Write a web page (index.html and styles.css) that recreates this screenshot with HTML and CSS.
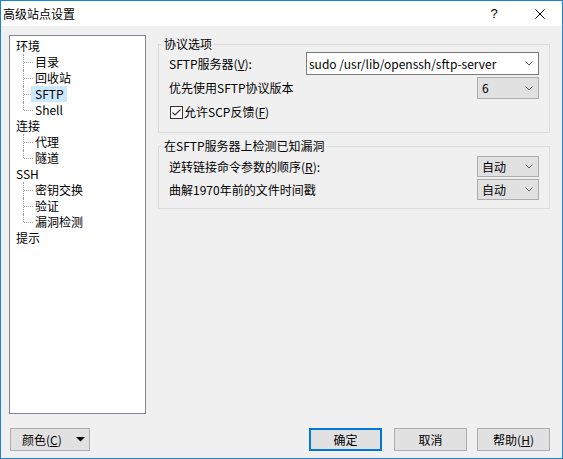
FILE: index.html
```html
<!DOCTYPE html>
<html lang="zh-CN">
<head>
<meta charset="utf-8">
<title>高级站点设置</title>
<link rel="stylesheet" href="styles.css">
</head>
<body>
<div class="window">
  <div class="titlebar">
    <span class="title">高级站点设置</span>
    <span class="tb-btn tb-help">?</span>
    <span class="tb-btn tb-close"><svg width="10" height="10" viewBox="0 0 10 10"><path d="M0.5 0.5 L9.5 9.5 M9.5 0.5 L0.5 9.5" stroke="#000" stroke-width="1" fill="none"/></svg></span>
  </div>
  <div class="body">
    <div class="main">
      <div class="tree">
        <div class="node">环境</div>
        <div class="leaf"><span class="lbl">目录</span></div>
        <div class="leaf"><span class="lbl">回收站</span></div>
        <div class="leaf"><span class="lbl sel">SFTP</span></div>
        <div class="leaf last"><span class="lbl">Shell</span></div>
        <div class="node">连接</div>
        <div class="leaf"><span class="lbl">代理</span></div>
        <div class="leaf last"><span class="lbl">隧道</span></div>
        <div class="node">SSH</div>
        <div class="leaf"><span class="lbl">密钥交换</span></div>
        <div class="leaf"><span class="lbl">验证</span></div>
        <div class="leaf last"><span class="lbl">漏洞检测</span></div>
        <div class="node">提示</div>
      </div>
      <div class="panel">
        <div class="group g1">
          <div class="legend">协议选项</div>
          <div class="row r1">
            <span class="label">SFTP服务器(<u>V</u>):</span>
            <div class="combo edit"><span>sudo /usr/lib/openssh/sftp-server</span><svg class="chev" width="8" height="5" viewBox="0 0 8 5"><polyline points="0.5,0.5 4,4 7.5,0.5" fill="none" stroke="#606060" stroke-width="1"/></svg></div>
          </div>
          <div class="row r2">
            <span class="label">优先使用SFTP协议版本</span>
            <div class="combo ro"><span>6</span><svg class="chev" width="8" height="5" viewBox="0 0 8 5"><polyline points="0.5,0.5 4,4 7.5,0.5" fill="none" stroke="#606060" stroke-width="1"/></svg></div>
          </div>
          <div class="row r3">
            <span class="check"><span class="box"><svg width="11" height="11" viewBox="0 0 11 11"><polyline points="1.5,5.5 4,8 9.5,2.5" fill="none" stroke="#333" stroke-width="1.2"/></svg></span>允许SCP反馈(<u>F</u>)</span>
          </div>
        </div>
        <div class="group g2">
          <div class="legend">在SFTP服务器上检测已知漏洞</div>
          <div class="row r4">
            <span class="label">逆转链接命令参数的顺序(<u>R</u>):</span>
            <div class="combo ro"><span>自动</span><svg class="chev" width="8" height="5" viewBox="0 0 8 5"><polyline points="0.5,0.5 4,4 7.5,0.5" fill="none" stroke="#606060" stroke-width="1"/></svg></div>
          </div>
          <div class="row r5">
            <span class="label">曲解1970年前的文件时间戳</span>
            <div class="combo ro"><span>自动</span><svg class="chev" width="8" height="5" viewBox="0 0 8 5"><polyline points="0.5,0.5 4,4 7.5,0.5" fill="none" stroke="#606060" stroke-width="1"/></svg></div>
          </div>
        </div>
      </div>
    </div>
    <div class="buttons">
      <div class="btn color-btn"><span>颜色(<u>C</u>)</span><svg class="drop" width="9" height="5" viewBox="0 0 9 5"><polygon points="0,0 9,0 4.5,4.5" fill="#000"/></svg></div>
      <div class="btn default ok">确定</div>
      <div class="btn cancel">取消</div>
      <div class="btn help">帮助(<u>H</u>)</div>
    </div>
  </div>
</div>
</body>
</html>
```

FILE: styles.css
```css
html, body {
  margin: 0;
  padding: 0;
  background: #ffffff;
}

.window {
  width: 563px;
  height: 459px;
  box-sizing: border-box;
  border: 1px solid #1883d7;
  background: #f0f0f0;
  display: flex;
  flex-direction: column;
  font-family: "Noto Sans CJK SC", "Noto Sans", sans-serif;
  font-size: 12px;
  line-height: 16px;
  color: #000;
}

.titlebar {
  height: 25px;
  flex: none;
  background: #ffffff;
  display: flex;
  align-items: center;
}

.title {
  flex: 1;
  padding-left: 2px;
}

.tb-btn {
  height: 25px;
  display: flex;
  align-items: center;
  justify-content: center;
}

.tb-help {
  width: 46px;
  font-family: "Liberation Sans", sans-serif;
  font-size: 13px;
}

.tb-close {
  width: 45px;
}

.body {
  flex: 1;
  display: flex;
  flex-direction: column;
  padding: 9px 12px 7px 8px;
}

.main {
  display: flex;
  gap: 12px;
  height: 379px;
}

.tree {
  width: 137px;
  box-sizing: border-box;
  border: 1px solid #828790;
  background: #ffffff;
  padding-top: 2px;
}

.node {
  height: 16px;
  padding-left: 6px;
}

.leaf {
  position: relative;
  height: 16px;
  padding-left: 21px;
}

.leaf::before {
  content: "";
  position: absolute;
  left: 13px;
  top: 0;
  height: 16px;
  border-left: 1px dotted #a0a0a0;
}

.leaf.last::before {
  height: 8px;
}

.leaf::after {
  content: "";
  position: absolute;
  left: 14px;
  top: 8px;
  width: 9px;
  border-top: 1px dotted #a0a0a0;
}

.lbl {
  position: relative;
  z-index: 1;
  display: inline-block;
  padding: 0 3px 0 4px;
  height: 16px;
}

.lbl.sel {
  background: #cce8ff;
}

.panel {
  width: 392px;
  padding-top: 9px;
}

.group {
  border: 1px solid #dcdcdc;
  padding: 0 10px;
}

.legend {
  width: max-content;
  background: #f0f0f0;
  margin: -8px 0 0 -6px;
  padding: 0 1px;
  height: 14px;
  line-height: 14px;
}

.row {
  display: flex;
  align-items: center;
  justify-content: space-between;
}

.r1 { height: 23px; margin-top: 1px; }
.r2 { height: 22px; margin-top: 2px; }
.r3 { height: 20px; margin-top: 3px; }
.g1 { padding-bottom: 10px; }

.g2 { margin-top: 13px; padding-bottom: 8px; }
.r4 { height: 21px; margin-top: 3px; }
.r5 { height: 21px; margin-top: 2px; }

.combo {
  box-sizing: border-box;
  height: 100%;
  display: flex;
  align-items: center;
}

.combo.edit {
  width: 233px;
  background: #ffffff;
  border: 1px solid #7a7a7a;
  padding-left: 2px;
}

.combo.ro {
  width: 62px;
  background: #e1e1e1;
  border: 1px solid #adadad;
  padding-left: 4px;
}

.chev {
  margin-left: auto;
  margin-right: 5px;
}

.check {
  display: flex;
  align-items: center;
  margin-left: 1px;
}

.box {
  box-sizing: border-box;
  width: 13px;
  height: 13px;
  border: 1px solid #333333;
  background: #ffffff;
  margin-right: 1px;
  display: flex;
}

.buttons {
  display: flex;
  height: 23px;
  margin-top: 14px;
}

.btn {
  box-sizing: border-box;
  height: 23px;
  border: 1px solid #adadad;
  background: #e1e1e1;
  display: flex;
  align-items: center;
  justify-content: center;
}

.btn.default {
  border: 2px solid #0078d7;
}

.color-btn {
  width: 80px;
  margin-left: 1px;
  justify-content: flex-start;
  padding-left: 11px;
}

.drop {
  margin-left: auto;
  margin-right: 4px;
}

.ok {
  width: 73px;
  margin-left: auto;
  margin-right: 12px;
}

.cancel {
  width: 73px;
  margin-right: 10px;
}

.help {
  width: 73px;
}
```
